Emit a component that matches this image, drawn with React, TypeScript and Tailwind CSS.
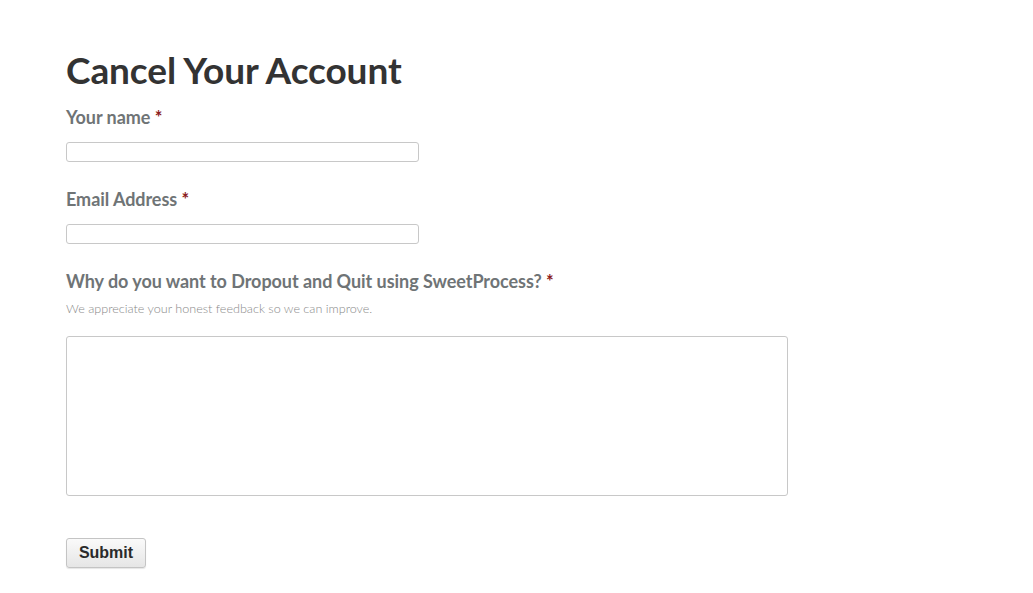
const Label = ({ text }: { text: string }) => (
  <label className="block text-[18px] font-bold leading-[22px] tracking-[-0.05px] text-[#6f7476]">
    {text} <span className="text-[#8b1a1a]">*</span>
  </label>
);

export default function App() {
  return (
    <div className="min-h-screen bg-white pl-[66px] pt-[46px] font-['Lato',sans-serif]">
      <h1 className="text-[37px] font-bold leading-[48px] tracking-[-0.1px] text-[#333]">
        Cancel Your Account
      </h1>

      <div className="mt-[12px]">
        <Label text="Your name" />
        <input
          type="text"
          className="mt-[14px] block h-[20px] w-[353px] rounded-[3px] border border-[#c8c8c8] bg-white"
        />
      </div>

      <div className="mt-[26px]">
        <Label text="Email Address" />
        <input
          type="text"
          className="mt-[14px] block h-[20px] w-[353px] rounded-[3px] border border-[#c8c8c8] bg-white"
        />
      </div>

      <div className="mt-[26px]">
        <Label text="Why do you want to Dropout and Quit using SweetProcess?" />
        <p className="mt-[8px] text-[12.6px] font-light leading-[17px] text-[#8a8a8a]">
          We appreciate your honest feedback so we can improve.
        </p>
        <textarea className="mt-[19px] block h-[160px] w-[722px] resize-none rounded-[3px] border border-[#c8c8c8] bg-white" />
      </div>

      <button className="mt-[42px] h-[30px] w-[80px] rounded-[3px] border border-[#c4c4c4] bg-gradient-to-b from-[#fafafa] to-[#e6e6e6] font-['Liberation_Sans',sans-serif] text-[16px] font-bold text-[#2a2a2a] shadow-[0_1px_1px_rgba(0,0,0,0.1)]">
        Submit
      </button>
    </div>
  );
}
